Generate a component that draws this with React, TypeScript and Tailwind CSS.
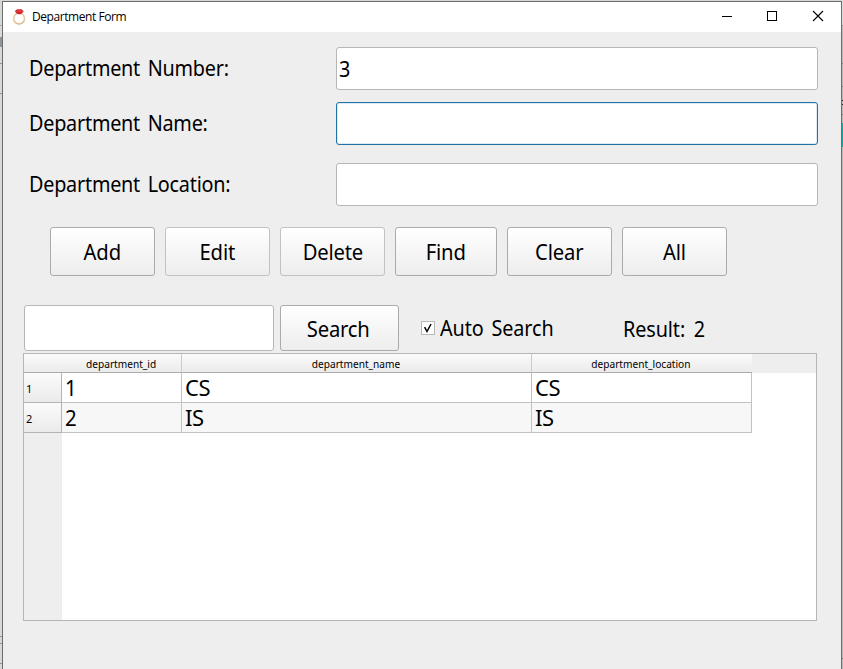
import type { ReactNode } from "react";

const fields = [
  { label: "Department Number:", value: "3", gap: "mt-[15px]", border: "border-[#b6b6b6]" },
  { label: "Department Name:", value: "", gap: "mt-[12px]", border: "border-[#2073a5] shadow-[inset_0_0_0_1px_#dceaf5]" },
  { label: "Department Location:", value: "", gap: "mt-[18px]", border: "border-[#b6b6b6]" },
];

const actions = [
  { label: "Add", size: "w-[105px]", border: "border-[#ababab]" },
  { label: "Edit", size: "w-[105px]", border: "border-[#c2c2c2]" },
  { label: "Delete", size: "w-[105px]", border: "border-[#c2c2c2]" },
  { label: "Find", size: "w-[102px]", border: "border-[#ababab]" },
  { label: "Clear", size: "w-[105px]", border: "border-[#ababab]" },
  { label: "All", size: "w-[105px]", border: "border-[#ababab]" },
];

const rows = [
  { id: "1", name: "CS", location: "CS", bg: "bg-white" },
  { id: "2", name: "IS", location: "IS", bg: "bg-[#f7f7f7]" },
];

function Text({ children, className = "tracking-[-0.25px] [word-spacing:3px]" }: { children: ReactNode; className?: string }) {
  return (
    <span className={`block origin-left scale-x-90 text-[22px] leading-[30px] whitespace-nowrap ${className}`}>
      {children}
    </span>
  );
}

function Button({ children, className }: { children: ReactNode; className: string }) {
  return (
    <button className={`flex shrink-0 items-center justify-center rounded-[3px] border bg-linear-to-b from-white to-[#ededed] ${className}`}>
      <span className="scale-x-[0.92] text-[22px] leading-[30px] tracking-[-0.2px]">{children}</span>
    </button>
  );
}

function HeaderCell({ children, className }: { children?: ReactNode; className: string }) {
  return (
    <div className={`flex h-[19px] shrink-0 items-center justify-center border-b border-b-[#ababab] bg-linear-to-b from-[#fbfbfb] to-[#ebebeb] pt-[2px] text-[11px] leading-[16px] ${className}`}>
      <span className="scale-x-[0.92]">{children}</span>
    </div>
  );
}

function RingIcon() {
  return (
    <svg width="14" height="16" viewBox="0 0 14 16" className="shrink-0">
      <circle cx="7.1" cy="9.4" r="5.4" fill="#fff" stroke="#e6cba4" strokeWidth="1.6" />
      <path d="M1.6 11.6a5.9 5.9 0 0 0 11 0" fill="none" stroke="#c9a57c" strokeWidth="0.6" />
      <path d="M2.9 2.2 5 .2h4.6l2 2L10.4 4 8.6 5.2H6L4.2 4Z" fill="#d0262b" />
      <path d="M3.2 2.2h8.2M5 .4l2.3 1.8L9.5.4" fill="none" stroke="#e8585a" strokeWidth="0.5" />
    </svg>
  );
}

export default function App() {
  return (
    <div className="flex h-[669px] w-[843px] overflow-hidden bg-[#d5d8d8] font-['Noto_Sans','DejaVu_Sans',sans-serif] text-black">
      <div className="flex w-[2px] shrink-0 flex-col bg-[#d8d8d8]">
        <div className="mt-[25px] h-px bg-[#aaa]" />
        <div className="mt-[11px] h-[10px] bg-[#8b959b]" />
        <div className="mt-[16px] h-px bg-[#999]" />
        <div className="mt-[29px] h-px bg-[#999]" />
        <div className="mt-[542px] h-px bg-[#999]" />
        <div className="mt-[6px] h-px bg-[#999]" />
        <div className="mt-[19px] h-px bg-[#999]" />
      </div>

      <div className="mt-px flex w-[840px] shrink-0 flex-col border-x border-t border-[#6d6d6d] bg-[#eeeeee]">
        <div className="flex h-[30px] shrink-0 items-center bg-white pr-[3px] pl-[9px] font-['Open_Sans','Noto_Sans',sans-serif]">
          <RingIcon />
          <span className="ml-[6px] grow text-[12px] leading-[16px] tracking-[-0.43px]">Department Form</span>
          <svg width="126" height="30" viewBox="0 0 126 30" fill="none" stroke="#000" className="shrink-0">
            <path d="M10 14.5h10" />
            <rect x="55.5" y="9.5" width="9" height="9" shapeRendering="crispEdges" />
            <path d="m101 9 10 10M111 9 101 19" strokeWidth="1.1" />
          </svg>
        </div>

        {fields.map((f) => (
          <div key={f.label} className={`flex h-[43px] shrink-0 items-center pl-[26px] ${f.gap}`}>
            <label className="w-[307px] pb-[3px]">
              <Text>{f.label}</Text>
            </label>
            <div className={`flex h-[43px] w-[482px] items-center rounded-[3px] border bg-white pb-[1px] pl-[2px] ${f.border}`}>
              <Text>{f.value}</Text>
            </div>
          </div>
        ))}

        <div className="mt-[21px] flex h-[49px] shrink-0 gap-[10px] pl-[47px]">
          {actions.map((a) => (
            <Button key={a.label} className={`${a.size} ${a.border} pb-[1px]`}>{a.label}</Button>
          ))}
        </div>

        <div className="mt-[29px] flex h-[46px] shrink-0 items-center pl-[21px]">
          <div className="h-[46px] w-[250px] rounded-[3px] border border-[#b6b6b6] bg-white" />
          <Button className="ml-[6px] h-[46px] w-[119px] border-[#ababab] pr-[2px]">Search</Button>
          <div className="ml-[22px] flex h-[14px] w-[14px] items-center justify-center border border-[#b8b8b8] bg-white">
            <svg width="12" height="12" viewBox="0 0 12 12">
              <path d="m2.6 5.2 2.4 4.3 4-7.5" fill="none" stroke="#000" strokeWidth="1.5" />
            </svg>
          </div>
          <div className="ml-[5px] w-[183px] pb-[2px]">
            <Text className="tracking-[-0.1px] [word-spacing:3px]">Auto Search</Text>
          </div>
          <Text className="tracking-[-0.1px] [word-spacing:4px]">Result: 2</Text>
        </div>

        <div className="mt-[2px] ml-[20px] flex h-[268px] w-[794px] shrink-0 flex-col border border-[#b5b5b5] bg-white">
          <div className="flex bg-[#eeeeee]">
            <HeaderCell className="w-[38px]" />
            <HeaderCell className="w-[120px] border-r border-r-[#cccccc]">department_id</HeaderCell>
            <HeaderCell className="w-[350px] border-r border-r-[#cccccc]">department_name</HeaderCell>
            <HeaderCell className="w-[220px] pr-[2px]">department_location</HeaderCell>
          </div>
          {rows.map((r) => (
            <div key={r.id} className="flex h-[30px] shrink-0 text-[22px] leading-[29px] tracking-[-0.5px]">
              <div className="flex w-[38px] items-center border-r border-b border-[#b4b4b4] bg-linear-to-b from-[#fbfbfb] to-[#ebebeb] pt-[2px] pl-[2px] text-[11px]">{r.id}</div>
              <div className={`w-[120px] border-r border-b border-[#c2c2c2] pl-[3px] ${r.bg}`}>
                <span className="inline-block origin-left scale-x-[0.93]">{r.id}</span>
              </div>
              <div className={`w-[350px] border-r border-b border-[#c2c2c2] pl-[3px] ${r.bg}`}>{r.name}</div>
              <div className={`w-[220px] border-r border-b border-[#c2c2c2] pl-[3px] ${r.bg}`}>{r.location}</div>
            </div>
          ))}
          <div className="w-[38px] grow bg-[#eeeeee]" />
        </div>
      </div>

      <div className="flex w-px shrink-0 flex-col bg-[#b9baba]">
        <div className="h-[25px] bg-[#dadddd]" />
        <div className="h-px bg-[#999]" />
        <div className="mt-[37px] h-px bg-[#888]" />
        <div className="mt-[22px] h-px bg-[#888]" />
        <div className="mt-[13px] h-px bg-[#222]" />
        <div className="mt-[3px] h-px bg-[#222]" />
        <div className="mt-[9px] h-px bg-[#888]" />
        <div className="mt-[8px] h-[24px] bg-[#13a9a9]" />
        <div className="mt-[511px] h-px bg-[#777]" />
      </div>
    </div>
  );
}
